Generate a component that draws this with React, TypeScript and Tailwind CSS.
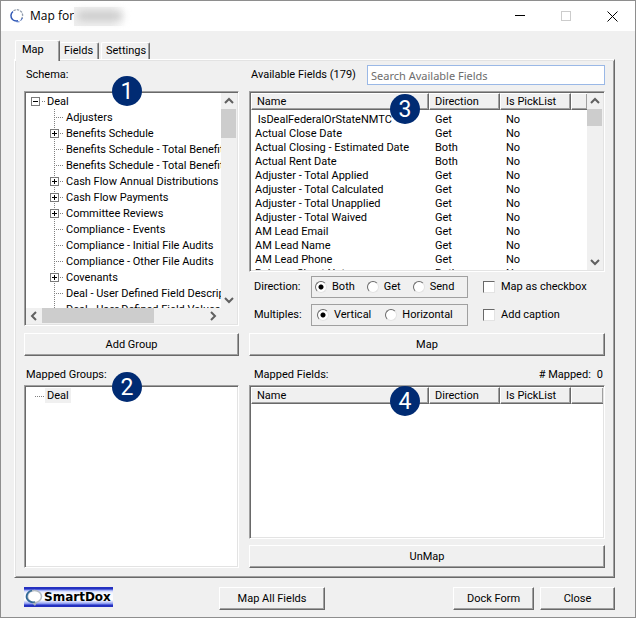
import { useState } from "react";
import type { ButtonHTMLAttributes, ReactNode } from "react";
import clsx from "clsx";

interface TreeItem {
  label: string;
  expandable?: boolean;
}

interface Field {
  name: string;
  direction: string;
  pickList: string;
}

const schemaItems: TreeItem[] = [
  { label: "Adjusters" },
  { label: "Benefits Schedule", expandable: true },
  { label: "Benefits Schedule - Total Benefit" },
  { label: "Benefits Schedule - Total Benefit" },
  { label: "Cash Flow Annual Distributions", expandable: true },
  { label: "Cash Flow Payments", expandable: true },
  { label: "Committee Reviews", expandable: true },
  { label: "Compliance - Events" },
  { label: "Compliance - Initial File Audits" },
  { label: "Compliance - Other File Audits" },
  { label: "Covenants", expandable: true },
  { label: "Deal - User Defined Field Descrip" },
  { label: "Deal - User Defined Field Values" },
];

const availableFields: Field[] = [
  { name: "\u00a0IsDealFederalOrStateNMTC", direction: "Get", pickList: "No" },
  { name: "Actual Close Date", direction: "Get", pickList: "No" },
  { name: "Actual Closing - Estimated Date", direction: "Both", pickList: "No" },
  { name: "Actual Rent Date", direction: "Both", pickList: "No" },
  { name: "Adjuster - Total Applied", direction: "Get", pickList: "No" },
  { name: "Adjuster - Total Calculated", direction: "Get", pickList: "No" },
  { name: "Adjuster - Total Unapplied", direction: "Get", pickList: "No" },
  { name: "Adjuster - Total Waived", direction: "Get", pickList: "No" },
  { name: "AM Lead Email", direction: "Get", pickList: "No" },
  { name: "AM Lead Name", direction: "Get", pickList: "No" },
  { name: "AM Lead Phone", direction: "Get", pickList: "No" },
  { name: "Balance Sheet Notes", direction: "Both", pickList: "No" },
];

function ClassicButton({ className, ...props }: ButtonHTMLAttributes<HTMLButtonElement>) {
  return (
    <button
      type="button"
      className={clsx(
        "h-[23px] shrink-0 border border-t-white border-l-white border-r-[#696969] border-b-[#696969] bg-[#f0f0f0] shadow-[inset_-1px_-1px_0_#a0a0a0]",
        className
      )}
      {...props}
    />
  );
}

function SunkenBox({ className, children }: { className?: string; children?: ReactNode }) {
  return (
    <div
      className={clsx(
        "relative border border-t-[#a0a0a0] border-l-[#a0a0a0] border-r-white border-b-white bg-white p-px shadow-[inset_1px_1px_0_#696969,inset_-1px_-1px_0_#e3e3e3]",
        className
      )}
    >
      {children}
    </div>
  );
}

function Badge({ className, children }: { className: string; children: ReactNode }) {
  return (
    <span
      className={clsx(
        "absolute z-10 flex size-[30px] items-center justify-center rounded-full bg-[#002b73] text-[23px] leading-none text-white",
        className
      )}
    >
      {children}
    </span>
  );
}

const arrowPaths = {
  up: "M4 10 L8 6 L12 10",
  down: "M4 6 L8 10 L12 6",
  left: "M10 4 L6 8 L10 12",
  right: "M6 4 L10 8 L6 12",
};

function ScrollArrow({ direction }: { direction: keyof typeof arrowPaths }) {
  return (
    <button type="button" aria-label={`Scroll ${direction}`} className="size-4 shrink-0">
      <svg viewBox="0 0 16 16" className="size-4" fill="none" stroke="#606060" strokeWidth="2">
        <path d={arrowPaths[direction]} />
      </svg>
    </button>
  );
}

function VerticalScrollbar({ thumb }: { thumb: string }) {
  return (
    <div className="flex w-4 shrink-0 flex-col bg-[#f0f0f0] pr-px">
      <ScrollArrow direction="up" />
      <div className="flex-1">
        <div className={clsx("bg-[#cdcdcd]", thumb)} />
      </div>
      <ScrollArrow direction="down" />
    </div>
  );
}

function Expander({ open }: { open?: boolean }) {
  return (
    <>
      <rect x="0.5" y="4.5" width="8" height="8" fill="#fff" stroke="#7a7a7a" />
      <path d={open ? "M2 8.5 H7" : "M2 8.5 H7 M4.5 6 V11"} stroke="#000" />
    </>
  );
}

function SchemaTree() {
  return (
    <ul className="min-w-0 flex-1 overflow-hidden pl-[5px] leading-[18px] whitespace-nowrap">
      <li>
        <div className="flex h-4">
          <svg width="16" height="16" className="shrink-0" fill="none">
            <path d="M11 8.5 H15" stroke="#808080" strokeDasharray="1 1" />
            <Expander open />
          </svg>
          Deal
        </div>
        <ul className="pl-[19px]">
          {schemaItems.map((item, i) => (
            <li key={i} className="flex h-4">
              <svg width="16" height="16" className="shrink-0" fill="none">
                <path d="M4.5 0 V16 M6 8.5 H14" stroke="#808080" strokeDasharray="1 1" />
                {item.expandable && <Expander />}
              </svg>
              {item.label}
            </li>
          ))}
        </ul>
      </li>
    </ul>
  );
}

function FieldTable({ fields }: { fields: Field[] }) {
  const th =
    "h-[17px] border-t border-r border-b border-l border-t-white border-l-white border-r-[#696969] border-b-[#696969] bg-[#f0f0f0] p-0 pl-[5px] text-left font-normal leading-[14px] shadow-[inset_-1px_-1px_0_#a0a0a0]";
  return (
    <table className="w-full table-fixed border-separate border-spacing-0 self-start whitespace-nowrap">
      <thead>
        <tr>
          <th className={clsx(th, "w-[178px]")}>Name</th>
          <th className={clsx(th, "w-[71px]")}>Direction</th>
          <th className={clsx(th, "w-[71px]")}>Is PickList</th>
          <th className={clsx(th, "border-r-0")} aria-label="Spacer" />
        </tr>
        <tr className="h-[3px]" />
      </thead>
      <tbody>
        {fields.map((field) => (
          <tr key={field.name} className="h-3.5 leading-[14px]">
            <td className="p-0 pl-1">{field.name}</td>
            <td className="p-0 pl-1.5">{field.direction}</td>
            <td className="p-0 pl-1.5">{field.pickList}</td>
            <td className="p-0" />
          </tr>
        ))}
      </tbody>
    </table>
  );
}

interface RadioGroupProps {
  name: string;
  options: string[];
  value: string;
  onChange: (value: string) => void;
  className: string;
}

function RadioGroup({ name, options, value, onChange, className }: RadioGroupProps) {
  return (
    <fieldset className={clsx("flex h-[22px] w-[157px] items-center border border-[#a0a0a0]", className)} aria-label={name}>
      {options.map((option) => (
        <label key={option} className="flex items-center gap-[5px]">
          <input
            type="radio"
            name={name}
            checked={value === option}
            onChange={() => onChange(option)}
            className="size-3 appearance-none rounded-full border border-t-[#696969] border-l-[#696969] border-r-[#e3e3e3] border-b-[#e3e3e3] bg-white checked:bg-[radial-gradient(circle,#000_2px,#fff_3px)]"
          />
          {option}
        </label>
      ))}
    </fieldset>
  );
}

function CheckOption({ label }: { label: string }) {
  return (
    <label className="flex items-center gap-1.5">
      <input
        type="checkbox"
        className="size-3 appearance-none border border-t-[#696969] border-l-[#696969] border-r-[#e3e3e3] border-b-[#e3e3e3] bg-white checked:bg-[#696969]"
      />
      {label}
    </label>
  );
}

function RingIcon() {
  return (
    <svg width="16" height="16" viewBox="0 0 16 16" fill="none">
      <path d="M4 3.5 C1.5 5.5 1.2 9 3.5 11.5 C5 12.8 7 13.2 9 12.8" stroke="#2f57b5" strokeWidth="1.5" />
      <path d="M4.5 2.8 C7 1 10.5 1.5 12.5 4 C14.3 6.5 14 10 11 12.5" stroke="#8f9bab" strokeWidth="1.3" strokeDasharray="2.5 1" />
      <path d="M7.5 13.8 L10.5 13.8" stroke="#5b7fd0" />
      <path d="M13.5 10 L12 12.5" stroke="#4a6fca" />
    </svg>
  );
}

function SmartDoxLogo() {
  return (
    <div className="flex h-5 w-[89px] items-center bg-[linear-gradient(#2430c0_0_2px,#7f8ff0_3px,#cdd5fb_4px,#f4f6ff_6px,#fff_13px,#c5cefa_15px,#7f8ff0_17px,#2430c0_18px)]">
      <svg width="20" height="20" viewBox="0 0 20 20" fill="none" className="shrink-0">
        <ellipse cx="10.5" cy="9.5" rx="7" ry="6" fill="#fff" stroke="#b4bcc4" strokeWidth="1.6" />
        <path d="M8 3.5 C2 5 1 11 5 14 C7 15.5 9 15.5 11 15" stroke="#2f6796" strokeWidth="1.8" />
        <path d="M8 16 L11 19 L13 15.5" fill="#aab3bb" />
      </svg>
      <span className="font-['DejaVu_Sans',sans-serif] text-xs leading-none font-bold">SmartDox</span>
    </div>
  );
}

export default function App() {
  const [direction, setDirection] = useState("Both");
  const [multiples, setMultiples] = useState("Vertical");
  const [search, setSearch] = useState("");

  return (
    <div className="flex min-h-screen flex-col border border-[#8e8e8e] bg-[#f0f0f0] font-[Roboto,sans-serif] text-[11px] leading-4 text-black">
      {/* Title bar */}
      <header className="flex h-[30px] items-center bg-white pl-2">
        <RingIcon />
        <h1 className="pl-[5px] font-['Open_Sans',sans-serif] text-xs">Map for</h1>
        <div className="flex h-[19px] w-[52px] items-center bg-[linear-gradient(to_right,#efefef_70%,#fff)] px-1">
          <div className="h-2 w-full bg-[#c4c4c4] blur-[4px]" />
        </div>
        <div className="ml-auto flex h-full">
          <button type="button" aria-label="Minimize" className="flex w-[46px] items-center justify-center">
            <svg width="10" height="10" stroke="#000"><path d="M0 4.5 H10" /></svg>
          </button>
          <button type="button" aria-label="Maximize" disabled className="flex w-[46px] items-center justify-center">
            <svg width="10" height="10" stroke="#ccc" fill="none"><rect x="0.5" y="0.5" width="9" height="9" /></svg>
          </button>
          <button type="button" aria-label="Close window" className="flex w-[46px] items-center justify-center">
            <svg width="11" height="11" stroke="#000"><path d="M0.5 0.5 L10.5 10.5 M10.5 0.5 L0.5 10.5" /></svg>
          </button>
        </div>
      </header>

      {/* Tabs */}
      <div role="tablist" className="flex h-7 items-end pl-3.5">
        <button
          type="button"
          role="tab"
          aria-selected="true"
          className="z-10 -mb-0.5 h-[21px] w-[45px] rounded-t-xs border border-b-0 border-t-white border-l-white border-r-[#696969] bg-[#f0f0f0] pb-0.5 pl-1.5 text-left shadow-[inset_-1px_0_0_#a0a0a0]"
        >
          Map
        </button>
        <button
          type="button"
          role="tab"
          aria-selected="false"
          className="h-[17px] w-[39px] rounded-t-xs border border-b-0 border-l-0 border-t-white border-r-[#696969] pl-1 text-left shadow-[inset_-1px_0_0_#a0a0a0]"
        >
          Fields
        </button>
        <button
          type="button"
          role="tab"
          aria-selected="false"
          className="ml-0.5 h-[17px] w-[49px] rounded-t-xs border border-b-0 border-t-white border-l-white border-r-[#696969] pl-1 text-left shadow-[inset_-1px_0_0_#a0a0a0]"
        >
          Settings
        </button>
      </div>

      {/* Map panel */}
      <main className="mr-5 ml-[13px] flex flex-1 gap-2.5 border border-t-white border-l-white border-r-[#696969] border-b-[#696969] p-[9px] pt-[5px] shadow-[inset_1px_1px_0_#e3e3e3,inset_-1px_-1px_0_#a0a0a0]">
        <section className="flex w-[215px] shrink-0 flex-col">
          <h2 className="mb-1.5 h-5 pl-0.5 leading-5">Schema:</h2>
          <SunkenBox className="flex h-[235px] flex-col">
            <Badge className="-top-4 left-[87px]">1</Badge>
            <div className="flex min-h-0 flex-1">
              <SchemaTree />
              <VerticalScrollbar thumb="h-[29px]" />
            </div>
            <div className="flex h-4 shrink-0 bg-[#f0f0f0] pr-4 pb-px">
              <ScrollArrow direction="left" />
              <div className="flex-1">
                <div className="h-full w-28 bg-[#cdcdcd]" />
              </div>
              <ScrollArrow direction="right" />
            </div>
          </SunkenBox>
          <ClassicButton className="mt-[7px]">Add Group</ClassicButton>

          <h2 className="mt-[9px] h-5 pl-0.5 leading-5">Mapped Groups:</h2>
          <SunkenBox className="flex-1">
            <Badge className="-top-3.5 left-[87px]">2</Badge>
            <ul>
              <li className="flex h-[17px] items-center pl-2">
                <svg width="11" height="16" fill="none">
                  <path d="M1 8.5 H10" stroke="#808080" strokeDasharray="1 1" />
                </svg>
                <span className="bg-[#f0f0f0] px-0.5 leading-[15px]">Deal</span>
              </li>
            </ul>
          </SunkenBox>
        </section>

        <section className="flex min-w-0 flex-1 flex-col">
          <div className="mb-1.5 flex h-5 items-center pl-0.5">
            <label htmlFor="search" className="w-[116px] shrink-0 whitespace-nowrap">Available Fields (179)</label>
            <input
              id="search"
              type="text"
              value={search}
              onChange={(e) => setSearch(e.target.value)}
              placeholder="Search Available Fields"
              className="h-5 min-w-0 flex-1 border border-[#9ab8e6] bg-white px-[3px] font-['Noto_Sans',sans-serif] text-[11px] outline-none placeholder:text-[#6d6d6d]"
            />
          </div>
          <SunkenBox className="flex h-[181px]">
            <Badge className="top-0.5 left-[140px]">3</Badge>
            <div className="flex min-w-0 flex-1 overflow-hidden">
              <FieldTable fields={availableFields} />
            </div>
            <VerticalScrollbar thumb="h-[17px]" />
          </SunkenBox>

          <div className="mt-1 flex items-center pl-[5px]">
            <span className="w-[57px]">Direction:</span>
            <RadioGroup
              name="Direction"
              options={["Both", "Get", "Send"]}
              value={direction}
              onChange={setDirection}
              className="gap-3 pl-[3px]"
            />
            <div className="pl-[15px]">
              <CheckOption label="Map as checkbox" />
            </div>
          </div>
          <div className="mt-1.5 flex items-center pl-[5px]">
            <span className="w-[57px]">Multiples:</span>
            <RadioGroup
              name="Multiples"
              options={["Vertical", "Horizontal"]}
              value={multiples}
              onChange={setMultiples}
              className="gap-3.5 pl-[5px]"
            />
            <div className="pl-[15px]">
              <CheckOption label="Add caption" />
            </div>
          </div>
          <ClassicButton className="mt-[7px]">Map</ClassicButton>

          <div className="mt-[9px] flex h-5 items-center justify-between pr-0.5 pl-[5px]">
            <h2>Mapped Fields:</h2>
            <span className="flex gap-1.5">
              <span># Mapped:</span>
              <span>0</span>
            </span>
          </div>
          <SunkenBox className="flex-1">
            <Badge className="top-0 left-[140px]">4</Badge>
            <FieldTable fields={[]} />
          </SunkenBox>
          <ClassicButton className="mt-1.5">UnMap</ClassicButton>
        </section>
      </main>

      {/* Footer */}
      <footer className="flex gap-1.5 pt-[9px] pr-5 pb-[7px] pl-[23px]">
        <SmartDoxLogo />
        <ClassicButton className="ml-[100px] w-[106px]">Map All Fields</ClassicButton>
        <ClassicButton className="ml-auto w-[81px]">Dock Form</ClassicButton>
        <ClassicButton className="w-[75px]">Close</ClassicButton>
      </footer>
    </div>
  );
}
